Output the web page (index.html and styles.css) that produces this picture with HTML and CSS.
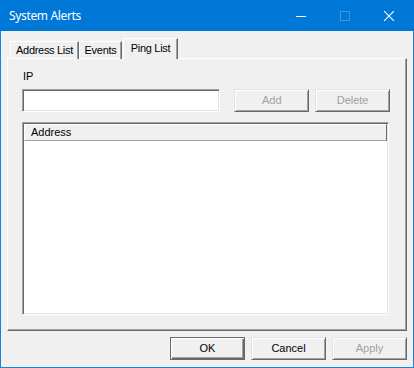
FILE: index.html
```html
<!DOCTYPE html>
<html>
<head>
<meta charset="utf-8">
<link rel="stylesheet" href="styles.css">
</head>
<body>
<div class="window">
  <div class="titlebar">
    <span class="title">System Alerts</span>
    <div class="controls">
      <span class="ctl"><svg width="10" height="10" viewBox="0 0 10 10"><path d="M0 5.5H10" stroke="#fff" stroke-width="1"/></svg></span>
      <span class="ctl"><svg width="10" height="10" viewBox="0 0 10 10"><rect x="0.5" y="0.5" width="9" height="9" fill="none" stroke="#3f94de" stroke-width="1"/></svg></span>
      <span class="ctl"><svg width="10" height="10" viewBox="0 0 10 10"><path d="M0 0L10 10M10 0L0 10" stroke="#fff" stroke-width="1.1"/></svg></span>
    </div>
  </div>
  <div class="client">
    <div class="tabs">
      <div class="tab t1">Address List</div>
      <div class="tab t2">Events</div>
      <div class="tab selected t3">Ping List</div>
    </div>
    <div class="panel">
      <div class="label">IP</div>
      <div class="row">
        <div class="textbox"></div>
        <div class="btn disabled add">Add</div>
        <div class="btn disabled">Delete</div>
      </div>
      <div class="listview">
        <div class="header"><div class="col">Address</div></div>
      </div>
    </div>
    <div class="footer">
      <div class="btn default">OK</div>
      <div class="btn">Cancel</div>
      <div class="btn disabled">Apply</div>
    </div>
  </div>
</div>
</body>
</html>
```

FILE: styles.css
```css
* { box-sizing: border-box; }
html, body { margin: 0; padding: 0; }
body { width: 414px; height: 368px; overflow: hidden; background: #f0f0f0; }
.window {
  width: 414px; height: 368px;
  border: 1px solid #1883d7;
  border-top: 0;
  background: #f0f0f0;
  font-family: "Liberation Sans", Arial, sans-serif;
  font-size: 11px;
  color: #000;
  display: flex; flex-direction: column;
}
.titlebar {
  height: 31px; margin: 0 -1px; background: #0078d7;
  display: flex; align-items: center; justify-content: space-between;
  padding-left: 9px;
  color: #fff;
}
.title { font-family: "Noto Sans", sans-serif; font-size: 12px; letter-spacing: -0.35px; margin-top: -1px; }
.controls { display: flex; height: 31px; padding-right: 3px; }
.ctl { width: 44px; height: 31px; display: flex; align-items: center; justify-content: center; }
.client { padding: 7px 6px 0 6px; flex: 1; display: flex; flex-direction: column; }
.tabs { display: flex; height: 20px; align-items: flex-end; padding-left: 3px; position: relative; z-index: 1; }
.tab {
  height: 18px; padding: 0; text-align: center; line-height: 17px; white-space: nowrap;
  letter-spacing: -0.3px;
  border: 1px solid #fff; border-bottom: 0; border-right: 1px solid #696969;
  box-shadow: inset -1px 0 #a0a0a0;
  margin-bottom: -1px;
}
.t1 { width: 69px; }
.t2 { width: 43px; }
.tab.selected {
  width: 55px; height: 21px;
  line-height: 18px; background: #f0f0f0;
  position: relative; left: 1px;
}
.panel {
  width: 400px; height: 273px;
  border-top: 1px solid #fff; border-left: 1px solid #fff;
  border-right: 1px solid #696969; border-bottom: 1px solid #696969;
  box-shadow: inset -1px -1px #a0a0a0;
  padding: 11px 16px 0 14px;
  display: flex; flex-direction: column;
}
.label { height: 19px; padding-left: 1px; }
.row { display: flex; height: 23px; }
.textbox {
  width: 199px; height: 23px; background: #fff;
  border: 1px solid; border-color: #a0a0a0 #fff #fff #a0a0a0;
  box-shadow: inset 1px 1px #696969, inset -1px -1px #e3e3e3;
}
.btn {
  width: 75px; height: 23px; text-align: center; line-height: 21px;
  border: 1px solid; border-color: #e3e3e3 #696969 #696969 #e3e3e3;
  box-shadow: inset 1px 1px #fff, inset -1px -1px #a0a0a0;
  background: #f0f0f0;
}
.btn.disabled { color: #a0a0a0; }
.add { margin-left: 14px; margin-right: 6px; }
.listview {
  margin-top: 10px; width: 367px; height: 193px; background: #fff;
  border: 1px solid; border-color: #a0a0a0 #fff #fff #a0a0a0;
  box-shadow: inset 1px 1px #696969, inset -1px -1px #e3e3e3;
  padding: 1px;
}
.header {
  height: 17px; background: #f0f0f0;
  border: 1px solid; border-color: #fff #696969 #a0a0a0 #fff;
  padding-left: 6px; line-height: 14px;
}
.footer { display: flex; justify-content: flex-end; gap: 6px; padding-top: 6px; }
.btn.default {
  border: 1px solid #696969;
  box-shadow: inset 1px 1px #fff, inset -1px -1px #696969, inset -2px -2px #a0a0a0;
}
```
